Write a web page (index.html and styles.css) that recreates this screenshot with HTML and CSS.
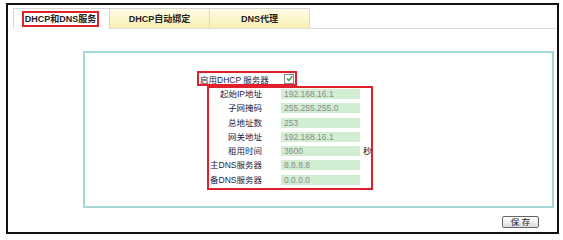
FILE: index.html
```html
<!DOCTYPE html>
<html>
<head>
    <title>DHCP和DNS服务</title>
    <link rel="stylesheet" href="styles.css">
</head>
<body>
    <div class="frame">
        <div class="tabs">
            <div class="tab active"><span class="mark">DHCP和DNS服务</span></div>
            <div class="tab">DHCP自动绑定</div>
            <div class="tab">DNS代理</div>
        </div>

        <div class="panel">
            <div class="enable-row">
                <span class="enable-label">启用DHCP 服务器</span>
                <span class="check">
                    <svg width="7" height="7" viewBox="0 0 7 7"><path d="M1 3.5 L3 5.5 L6.2 1.2" fill="none" stroke="#2e9a2e" stroke-width="1.3"/></svg>
                </span>
            </div>

            <div class="fields">
                <div class="row"><span class="label">起始IP地址</span><span class="input">192.168.16.1</span></div>
                <div class="row"><span class="label">子网掩码</span><span class="input">255.255.255.0</span></div>
                <div class="row"><span class="label">总地址数</span><span class="input">253</span></div>
                <div class="row"><span class="label">网关地址</span><span class="input">192.168.16.1</span></div>
                <div class="row"><span class="label">租用时间</span><span class="input">3600</span><span class="unit">秒</span></div>
                <div class="row"><span class="label">主DNS服务器</span><span class="input">8.8.8.8</span></div>
                <div class="row"><span class="label">备DNS服务器</span><span class="input">0.0.0.0</span></div>
            </div>
        </div>

        <div class="actions">
            <button class="save">保 存</button>
        </div>
    </div>
</body>
</html>
```

FILE: styles.css
```css
body { margin: 0; padding: 0; background: #fff; font-family: "Liberation Sans", "Noto Sans CJK SC", sans-serif; }

.frame {
    margin: 3px 0 0 6px;
    width: 544px;
    height: 224px;
    border: 2px solid #111;
    padding: 3px 0 0 5px;
}

.tabs { display: flex; border-bottom: 1px solid #dedede; height: 20px; }
.tab {
    width: 100px;
    height: 20px;
    box-sizing: border-box;
    border: 1px solid #d8d8d8;
    border-bottom: none;
    border-left: none;
    background: linear-gradient(#fffde8, #f8f0b0);
    font-size: 9px;
    font-weight: bold;
    color: #222;
    display: flex;
    align-items: center;
    justify-content: center;
}
.tab.active {
    width: 97px;
    background: #fff;
    border-left: 1px solid #d8d8d8;
    height: 21px;
    margin-bottom: -1px;
}
.mark {
    border: 2px solid #e0202a;
    padding: 1px 1px;
    line-height: 10px;
    margin-left: -2px;
}

.panel {
    margin: 22px 0 0 70px;
    width: 355px;
    height: 135px;
    border: 2px solid #a3d6d6;
    padding: 18px 0 0 112px;
}

.enable-row {
    width: 100px;
    height: 15px;
    box-sizing: border-box;
    border: 2px solid #e0202a;
    display: flex;
    align-items: center;
    font-size: 8.5px;
    color: #1c1c44;
}
.enable-label { width: 84px; padding-left: 1px; white-space: nowrap; }
.check {
    width: 8px;
    height: 8px;
    border: 1px solid #8a8a8a;
    background: #fff;
    display: flex;
    align-items: center;
    justify-content: center;
}

.fields {
    margin-left: 10px;
    width: 166px;
    height: 104px;
    box-sizing: border-box;
    border: 2px solid #e0202a;
    padding-top: 1px;
    display: grid;
    grid-auto-rows: 14.3px;
}
.row { display: flex; align-items: flex-start; font-size: 8.5px; }
.label { width: 53px; text-align: right; color: #1c1c44; line-height: 10px; white-space: nowrap; }
.input {
    margin-left: 19px;
    width: 79px;
    height: 10px;
    line-height: 10px;
    background: #d2eed2;
    color: #8a8a8a;
    padding-left: 3px;
    box-sizing: border-box;
}
.unit { margin-left: 3px; line-height: 10px; color: #111; }

.actions { display: flex; justify-content: flex-end; padding-right: 18px; margin-top: 8px; }
.save {
    width: 37px;
    height: 12px;
    padding: 0;
    border: 1px solid #666;
    border-radius: 2px;
    background: linear-gradient(#ffffff, #dcdcdc);
    font-family: "Liberation Sans", "Noto Sans CJK SC", sans-serif;
    font-size: 8.5px;
    line-height: 10px;
    color: #222;
}
```
